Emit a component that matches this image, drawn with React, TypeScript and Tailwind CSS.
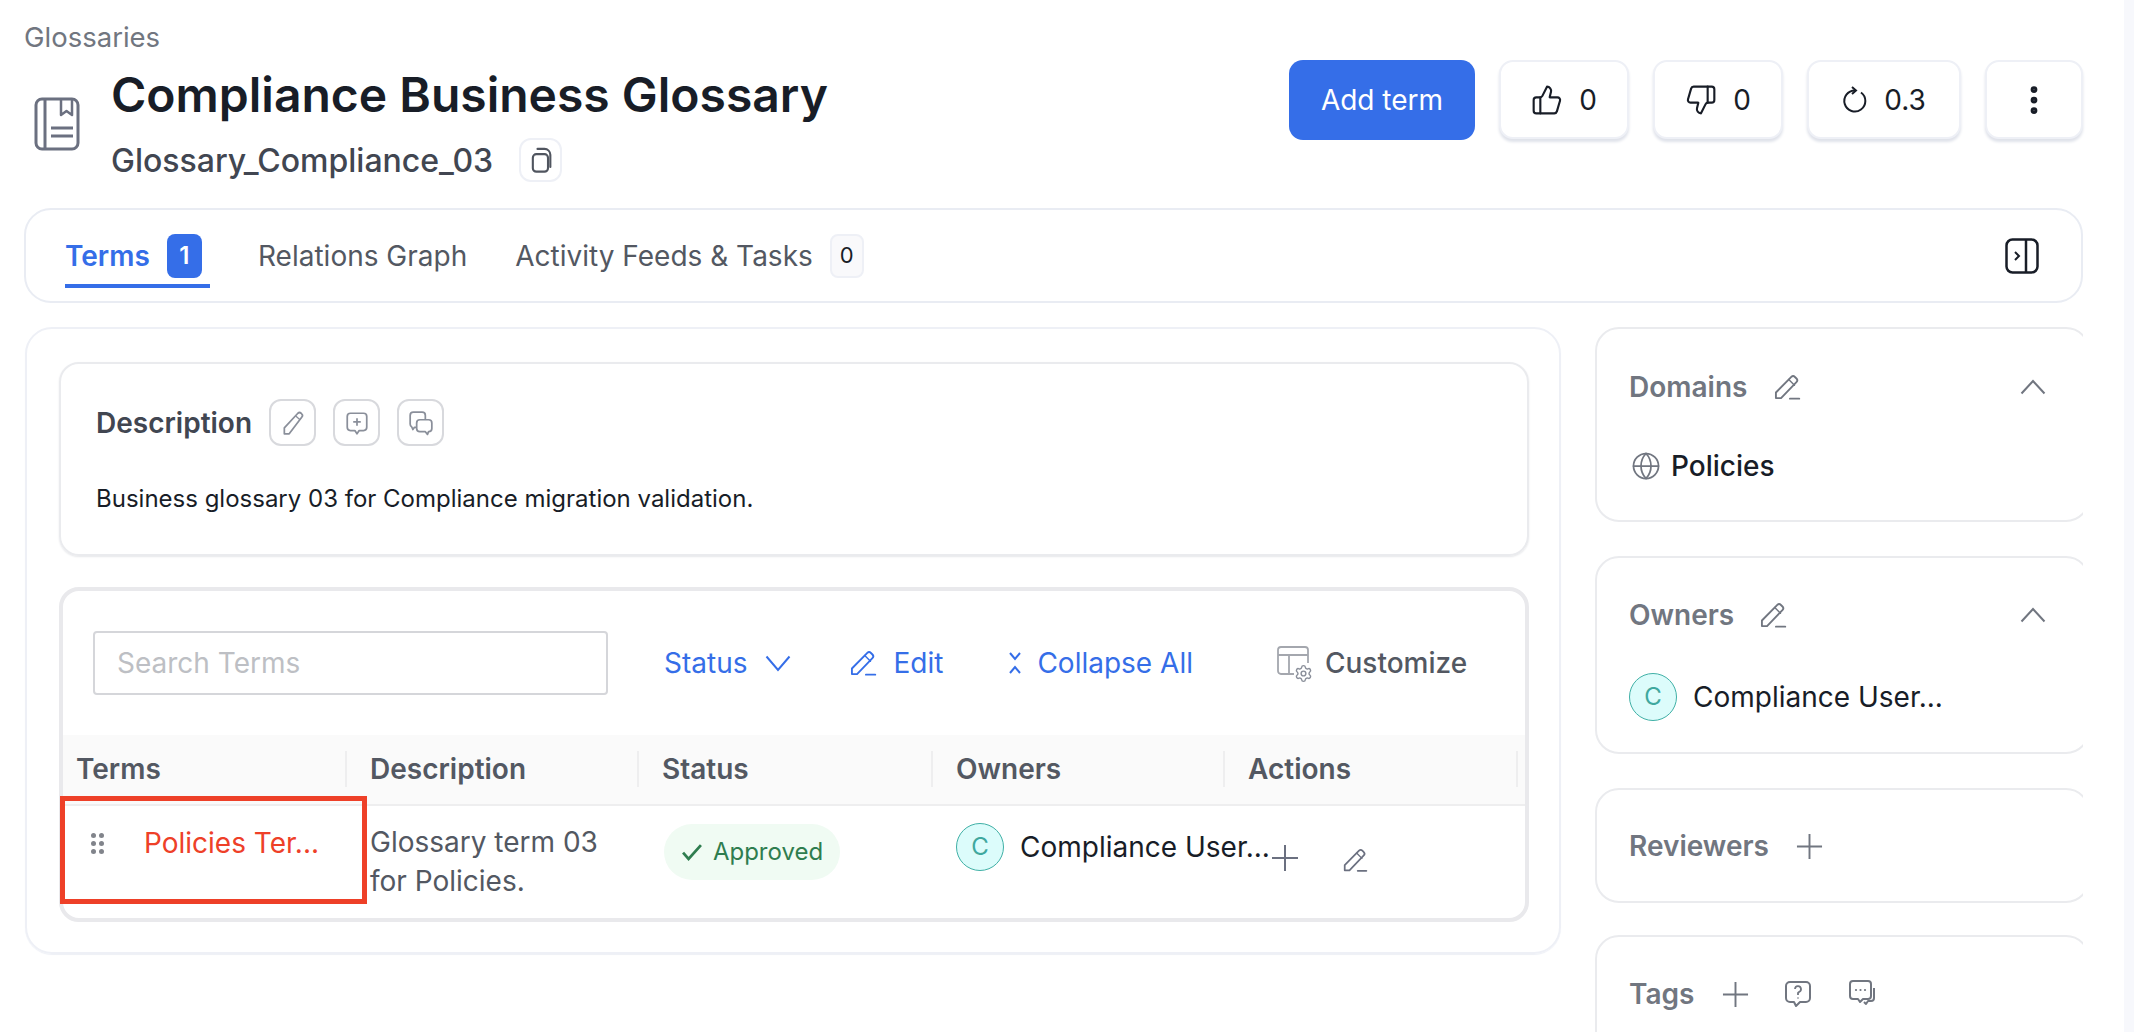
import { Globe, MoreVertical, Settings, ThumbsDown, ThumbsUp } from "lucide-react";

function Pencil({ className }: { className?: string }) {
  return (
    <svg viewBox="0 0 24 24" fill="none" stroke="currentColor" strokeWidth="1.6" strokeLinejoin="round" strokeLinecap="round" className={className}>
      <path d="M2.500 21.500v-4.800L15.700 3.400a2.200 2.200 0 0 1 3.100 0l1.300 1.300a2.200 2.200 0 0 1 0 3.100L6.900 21.500H2.500z" />
      <path d="M13.500 5.600l4.900 4.900" strokeWidth="1.200" />
      <path d="M14.500 22h8" />
    </svg>
  );
}

function PlainPencil({ className }: { className?: string }) {
  return (
    <svg viewBox="0 0 24 24" fill="none" stroke="currentColor" strokeWidth="1.600" strokeLinejoin="round" className={className}>
      <path d="M4 22v-5.500L16.500 3a2.200 2.200 0 0 1 3 0l.5.500a2.200 2.200 0 0 1 .2 3L8.500 22H4z" />
      <path d="M14.500 5.500l4 3.500" strokeWidth="1.200" />
    </svg>
  );
}

function PlusMark({ className }: { className?: string }) {
  return (
    <svg viewBox="0 0 28 28" fill="none" stroke="currentColor" strokeWidth="2" className={className}>
      <path d="M14 1v26M1 14h26" />
    </svg>
  );
}

function UpChevron({ className }: { className?: string }) {
  return (
    <svg viewBox="0 0 26 16" fill="none" stroke="currentColor" strokeWidth="2" className={className}>
      <path d="M1.500 14.500L13 2l11.500 12.500" />
    </svg>
  );
}

function BookIcon({ className }: { className?: string }) {
  return (
    <svg viewBox="0 0 46 54" fill="none" stroke="currentColor" strokeWidth="3" strokeLinejoin="round" className={className}>
      <rect x="2" y="2" width="42" height="50" rx="6" />
      <path d="M11 2v50" />
      <path d="M27 2v16l5.500-4 5.500 4V2" strokeWidth="2.500" />
      <path d="M17 31h22M17 39h22" />
    </svg>
  );
}

function Avatar() {
  return (
    <div className="flex h-12 w-12 shrink-0 items-center justify-center rounded-full border border-[#3fb0a6] bg-[#dcfcfb] text-[24px] text-[#3fa89e]">
      C
    </div>
  );
}

function IconBox({ children }: { children: React.ReactNode }) {
  return (
    <div className="flex h-[47px] w-[47px] items-center justify-center rounded-xl border-2 border-[#d8d9dd] text-[#8a8f9a]">
      {children}
    </div>
  );
}

function VoteButton({ children, width }: { children: React.ReactNode; width: string }) {
  return (
    <div className={`flex h-[79px] items-center justify-center gap-[16px] rounded-[14px] border-2 border-[#eef0f6] bg-white text-[28px] text-[#181d27] shadow-[0_3px_3px_#dfe2ea] ${width}`}>
      {children}
    </div>
  );
}

function SideHead({ label, children }: { label: string; children?: React.ReactNode }) {
  return (
    <div className="flex h-10 items-center text-[#717680]">
      <span className="text-[28px] font-semibold">{label}</span>
      {children}
    </div>
  );
}

const cols = "grid grid-cols-[284px_292px_294px_292px_293px]";

export default function App() {
  return (
    <div className="flex h-screen overflow-hidden bg-white font-['Inter',sans-serif]">
      <div className="w-[2124px] shrink-0 pl-6">
        <div className="w-[2059px]">
          <div className="h-[60px] pt-[19px] text-[27.5px] leading-9 text-[#717680]">Glossaries</div>
          <div className="flex h-[148px]">
            <div className="w-[87px] pl-[10px] pt-[37px]">
              <BookIcon className="h-[54px] w-[46px] text-[#6b7080]" />
            </div>
            <div className="flex-1 pt-[7px]">
              <h1 className="text-[48px] leading-[56px] font-semibold text-[#181d27]">Compliance Business Glossary</h1>
              <div className="mt-[15px] flex h-11 items-center">
                <span className="pt-[2px] text-[32px] font-medium text-[#414651]">Glossary_Compliance_03</span>
                <div className="ml-[26px] flex h-11 w-[43px] items-center justify-center rounded-xl border-2 border-[#eef0f6]">
                  <svg viewBox="0 0 24 24" fill="none" stroke="#50555f" strokeWidth="1.8" className="h-[28px] w-[28px]">
                    <rect x="5" y="7" width="13" height="15" rx="3" />
                    <path d="M9 2.500h6a5 5 0 0 1 5 5V18" strokeLinecap="round" />
                  </svg>
                </div>
              </div>
            </div>
            <div className="flex items-start gap-[24px]">
              <div className="flex h-20 w-[186px] items-center justify-center rounded-[14px] bg-[#356ee8] text-[28px] text-white">Add term</div>
              <VoteButton width="w-[130px]"><ThumbsUp className="h-[32px] w-[32px]" strokeWidth={1.6} /><span>0</span></VoteButton>
              <VoteButton width="w-[130px]"><ThumbsDown className="h-[32px] w-[32px]" strokeWidth={1.6} /><span>0</span></VoteButton>
              <VoteButton width="w-[154px]">
                <svg viewBox="0 0 26 28" fill="none" stroke="currentColor" strokeWidth="2" className="h-[28px] w-[26px]">
                  <path d="M19 6.500A10.500 10.500 0 1 1 13 4.500" />
                  <path d="M10 1l4 3.500-4 3.500" />
                </svg>
                <span>0.3</span>
              </VoteButton>
              <VoteButton width="w-[98px]"><MoreVertical className="h-9 w-9" strokeWidth={2.500} /></VoteButton>
            </div>
          </div>

          <div className="flex h-[95px] items-center justify-between rounded-[27px] border-2 border-[#e9ecf3] pl-[39px] pr-[42px]">
            <div className="flex h-full items-center text-[28px]">
              <div className="relative flex w-[145px] items-center gap-[17px] text-[#356ee8]">
                <span className="font-semibold">Terms</span>
                <span className="flex h-[44px] w-[35px] items-center justify-center rounded-lg bg-[#356ee8] text-[24px] font-semibold text-white">1</span>
                <span className="absolute top-[50px] left-0 h-1 w-[145px] bg-[#356ee8]" />
              </div>
              <span className="ml-[48px] text-[#535862]">Relations Graph</span>
              <span className="ml-[48px] text-[#535862]">Activity Feeds &amp; Tasks</span>
              <span className="ml-[17px] flex h-[44px] w-[34px] items-center justify-center rounded-lg border-2 border-[#eef0f6] bg-[#f9f9fb] text-[22px] text-[#181d27]">0</span>
            </div>
            <svg viewBox="0 0 34 36" fill="none" stroke="#181d27" strokeWidth="2.500" className="h-9 w-[34px]">
              <rect x="1.500" y="1.500" width="31" height="33" rx="6" />
              <path d="M21 1.500v33" />
              <path d="M10 14l4 4-4 4" strokeWidth="2" />
            </svg>
          </div>

          <div className="mt-[24px] flex gap-[34px] pl-[1px]">
            <div className="h-[627px] w-[1536px] shrink-0 rounded-[27px] border-2 border-[#eef0f6] pl-[32px] pt-[33px] shadow-[0_1px_1px_#eef0f6]">
              <div className="h-[194px] w-[1470px] rounded-[20px] border-2 border-[#eaebee] pl-[35px] pt-[35px] shadow-[0_1px_2px_#e6e7ea]">
                <div className="flex items-center">
                  <span className="text-[28px] font-semibold text-[#414651]">Description</span>
                  <div className="ml-[17px] flex gap-[17px]">
                    <IconBox><PlainPencil className="h-[26px] w-[26px]" /></IconBox>
                    <IconBox>
                      <svg viewBox="0 0 24 24" fill="none" stroke="currentColor" strokeWidth="1.6" strokeLinejoin="round" className="h-[26px] w-[26px]">
                        <path d="M6 3h12a3 3 0 0 1 3 3v10a3 3 0 0 1-3 3h-4l-2 3-2-3H6a3 3 0 0 1-3-3V6a3 3 0 0 1 3-3z" />
                        <path d="M12 7.500v7M8.500 11h7" />
                      </svg>
                    </IconBox>
                    <IconBox>
                      <svg viewBox="0 0 24 24" fill="none" stroke="currentColor" strokeWidth="1.6" strokeLinejoin="round" className="h-[26px] w-[26px]">
                        <path d="M8 16H6l-1.500 2-1-2.300A3 3 0 0 1 2 13V5a3 3 0 0 1 3-3h8a3 3 0 0 1 3 3v4" />
                        <path d="M11 9h8a3 3 0 0 1 3 3v5a3 3 0 0 1-3 3l-1 2.500-2-2.500h-5a3 3 0 0 1-3-3v-5a3 3 0 0 1 3-3z" />
                      </svg>
                    </IconBox>
                  </div>
                </div>
                <p className="mt-[37px] text-[24px] leading-8 text-[#181d27]">Business glossary 03 for Compliance migration validation.</p>
              </div>

              <div className="relative mt-[31px] h-[335px] w-[1470px] rounded-[20px] border-4 border-[#e9e9ec]">
                <div className="flex h-[144px] items-start pt-[40px] text-[28px]">
                  <div className="ml-[30px] flex h-16 w-[515px] items-center rounded border-2 border-[#d5d6da] pl-[22px] text-[#bdbfc4]">Search Terms</div>
                  <div className="ml-[56px] flex h-16 items-center text-[#356ee8]">
                    <span>Status</span>
                    <svg viewBox="0 0 26 17" fill="none" stroke="currentColor" strokeWidth="2" className="ml-[18px] h-[17px] w-[26px]">
                      <path d="M1.500 1.500L13 15 24.500 1.500" />
                    </svg>
                    <Pencil className="ml-[58px] h-[28px] w-[28px]" />
                    <span className="ml-[16px]">Edit</span>
                    <svg viewBox="0 0 14 24" fill="none" stroke="currentColor" strokeWidth="2" className="ml-[65px] h-[24px] w-[14px]">
                      <path d="M2 2l5 6 5-6M2 22l5-6 5 6" />
                    </svg>
                    <span className="ml-[15px]">Collapse All</span>
                  </div>
                  <div className="ml-[84px] flex h-16 items-center text-[#535862]">
                    <div className="relative h-[34px] w-[34px]">
                      <svg viewBox="0 0 34 34" fill="none" stroke="#a4a7ae" strokeWidth="1.800" className="h-[34px] w-[34px]">
                        <path d="M18 28H4a3 3 0 0 1-3-3V4a3 3 0 0 1 3-3h24a3 3 0 0 1 3 3v13M1 9h30M12 9v19" />
                      </svg>
                      <Settings className="absolute -right-[2px] -bottom-[3px] h-[19px] w-[19px] bg-white text-[#8a8f9a]" strokeWidth={1.8} />
                    </div>
                    <span className="ml-[14px] font-medium">Customize</span>
                  </div>
                </div>

                <div className={`${cols} h-[71px] items-center border-b-2 border-[#eeeeef] bg-[#fafafa] pb-[2px] text-[28px] font-semibold text-[#535862]`}>
                  {["Terms", "Description", "Status", "Owners", "Actions"].map((h, i) => (
                    <div key={h} className={`flex h-9 items-center border-r-2 border-[#eeeeef] ${i === 0 ? "pl-[13px]" : "pl-[23px]"}`}>{h}</div>
                  ))}
                </div>

                <div className={`${cols} h-[112px]`}>
                  <div className="flex items-start pl-[28px] pt-[19px]">
                    <div className="mt-[8px] grid grid-cols-2 gap-x-[3px] gap-y-[3px]">
                      {[0, 1, 2, 3, 4, 5].map((d) => (
                        <span key={d} className="h-[5px] w-[5px] rounded-full bg-[#81848b]" />
                      ))}
                    </div>
                    <span className="ml-[40px] text-[28px] leading-9 text-[#ee4028]">Policies Ter...</span>
                  </div>
                  <div className="pl-[23px] pt-[17px] text-[28px] leading-[39px] text-[#535862]">
                    Glossary term 03
                    <br />
                    for Policies.
                  </div>
                  <div className="pl-[25px] pt-[18px]">
                    <div className="flex h-14 w-[176px] items-center justify-center gap-[10px] rounded-full bg-[#f0fbf3] text-[24px] text-[#2f7d4f]">
                      <svg viewBox="0 0 16 16" fill="none" stroke="currentColor" strokeWidth="2" className="h-[22px] w-[22px]">
                        <path d="M1.500 8.500l4 4.500 9-10" />
                      </svg>
                      Approved
                    </div>
                  </div>
                  <div className="flex items-start pl-[23px] pt-[17px]">
                    <Avatar />
                    <span className="ml-[16px] whitespace-nowrap text-[28px] leading-[48px] text-[#181d27]">Compliance User...</span>
                  </div>
                  <div className="flex items-start pl-[46px] pt-[38px] text-[#6b7080]">
                    <PlusMark className="h-[28px] w-[28px]" />
                    <Pencil className="ml-[43px] mt-[3px] h-[26px] w-[26px]" />
                  </div>
                </div>

                <div className="absolute top-[205px] -left-[3px] h-[108px] w-[307px] border-[5px] border-[#ee4028]" />
              </div>
            </div>

            <div className="w-[488px] shrink-0 overflow-hidden">
              <div className="flex w-[495px] flex-col gap-[34px]">
                <div className="h-[195px] rounded-[24px] border-2 border-[#eaebee] pl-[32px] pt-[38px]">
                  <SideHead label="Domains">
                    <Pencil className="ml-[26px] h-[28px] w-[28px]" />
                    <UpChevron className="ml-[219px] h-4 w-[26px]" />
                  </SideHead>
                  <div className="mt-[38px] flex items-center gap-[10px]">
                    <Globe className="ml-[2px] h-[30px] w-[30px] text-[#717680]" strokeWidth={1.4} />
                    <span className="text-[28px] font-medium text-[#181d27]">Policies</span>
                  </div>
                </div>
                <div className="h-[198px] rounded-[24px] border-2 border-[#eaebee] pl-[32px] pt-[37px]">
                  <SideHead label="Owners">
                    <Pencil className="ml-[25px] h-[28px] w-[28px]" />
                    <UpChevron className="ml-[233px] h-4 w-[26px]" />
                  </SideHead>
                  <div className="mt-[38px] flex items-center gap-[16px]">
                    <Avatar />
                    <span className="text-[28px] text-[#181d27]">Compliance User...</span>
                  </div>
                </div>
                <div className="h-[115px] rounded-[24px] border-2 border-[#eaebee] pl-[32px] pt-[36px]">
                  <SideHead label="Reviewers">
                    <PlusMark className="ml-[27px] h-[27px] w-[27px]" />
                  </SideHead>
                </div>
                <div className="-mt-[2px] h-[200px] rounded-[24px] border-2 border-[#eaebee] pl-[32px] pt-[37px]">
                  <SideHead label="Tags">
                    <PlusMark className="ml-[28px] h-[27px] w-[27px]" />
                    <svg viewBox="0 0 28 28" fill="none" stroke="currentColor" strokeWidth="2" strokeLinejoin="round" className="ml-[35px] h-[28px] w-[28px]">
                      <path d="M6 2h16a4 4 0 0 1 4 4v12a4 4 0 0 1-4 4h-6l-4 4-2-4H6a4 4 0 0 1-4-4V6a4 4 0 0 1 4-4z" />
                      <path d="M11 9a3 3 0 1 1 4 3l-1 1v2M14 17.500v1" strokeWidth="1.800" />
                    </svg>
                    <svg viewBox="0 0 28 28" fill="none" stroke="currentColor" strokeWidth="2" strokeLinejoin="round" className="ml-[36px] h-[28px] w-[28px]">
                      <path d="M5 1h15a3 3 0 0 1 3 3v12a3 3 0 0 1-3 3h-5l-3 3-2-3H5a3 3 0 0 1-3-3V4a3 3 0 0 1 3-3z" />
                      <path d="M26 8v10a3 3 0 0 1-3 3h-3l-2 3-2-2" />
                      <path d="M8 10h.01M12.500 10h.01M17 10h.01" strokeWidth="2.200" strokeLinecap="round" />
                    </svg>
                  </SideHead>
                </div>
              </div>
            </div>
          </div>
        </div>
      </div>
      <div className="flex-1 bg-[#f7f8fc]" />
    </div>
  );
}
